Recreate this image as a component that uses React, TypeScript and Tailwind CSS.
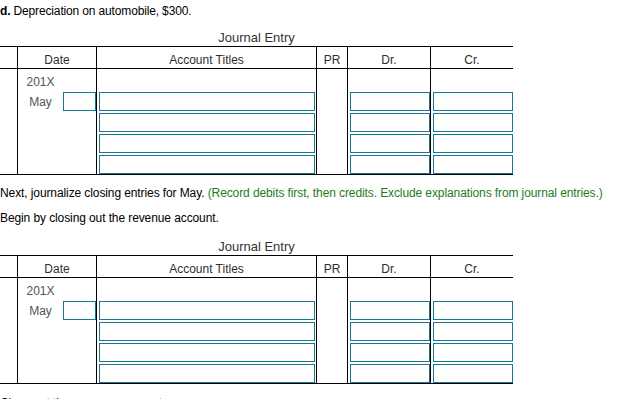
const cols = "grid grid-cols-[18px_79px_220px_31px_83px_82px]";

function Box({ w }: { w: string }) {
  return (
    <input
      type="text"
      className={`block h-[19px] ${w} border border-[#17788f] bg-white outline-none`}
    />
  );
}

function Column({ w }: { w: string }) {
  return (
    <div className="flex flex-col gap-[2px] pl-[2px] pt-[23px]">
      {[0, 1, 2, 3].map((i) => (
        <Box key={i} w={w} />
      ))}
    </div>
  );
}

function JournalTable({ lead }: { lead: string }) {
  return (
    <div className="w-[513px]">
      <div className={`${lead} text-center text-[13px] leading-[16px] text-[#333]`}>Journal Entry</div>
      <div className="border-y border-black">
        {/* header */}
        <div className={`${cols} h-[22px] border-b border-black text-[#2e2e2e]`}>
          <div className="border-r border-black" />
          <div className="border-r border-black pt-[6px] text-center leading-[14px]">Date</div>
          <div className="border-r border-black pt-[6px] text-center leading-[14px]">Account Titles</div>
          <div className="border-r border-black pt-[6px] text-center leading-[14px]">PR</div>
          <div className="border-r border-black pt-[6px] text-center leading-[14px]">Dr.</div>
          <div className="pt-[6px] text-center leading-[14px]">Cr.</div>
        </div>
        {/* body */}
        <div className={`${cols} h-[105px]`}>
          <div className="border-r border-black" />
          <div className="border-r border-black text-[#555]">
            <div className="h-[23px] w-[45px] pt-[6px] text-center leading-[14px]">201X</div>
            <div className="flex items-start">
              <div className="mt-[3px] w-[45px] text-center leading-[14px]">May</div>
              <Box w="w-[33px]" />
            </div>
          </div>
          <div className="border-r border-black">
            <Column w="w-[216px]" />
          </div>
          <div className="border-r border-black" />
          <div className="border-r border-black">
            <Column w="w-[80px]" />
          </div>
          <div>
            <Column w="w-[80px]" />
          </div>
        </div>
      </div>
    </div>
  );
}

export default function App() {
  return (
    <div className="min-h-[399px] bg-white font-['Liberation_Sans',Arial,sans-serif] text-[12px] text-black">
      <p className="pt-[4px] leading-[14px] tracking-[-0.15px]">
        <b>d.</b> Depreciation on automobile, $300.
      </p>
      <JournalTable lead="mt-[12px]" />
      <p className="mt-[11px] leading-[14px] tracking-[-0.1px]">
        Next, journalize closing entries for May.{" "}
        <span className="text-[#1e7b1e]">
          (Record debits first, then credits. Exclude explanations from journal entries.)
        </span>
      </p>
      <p className="mt-[11px] leading-[14px] tracking-[-0.1px]">Begin by closing out the revenue account.</p>
      <JournalTable lead="mt-[14px]" />
      <p className="mt-[12px] leading-[14px] tracking-[-0.1px]">Close out the expense accounts.</p>
    </div>
  );
}
